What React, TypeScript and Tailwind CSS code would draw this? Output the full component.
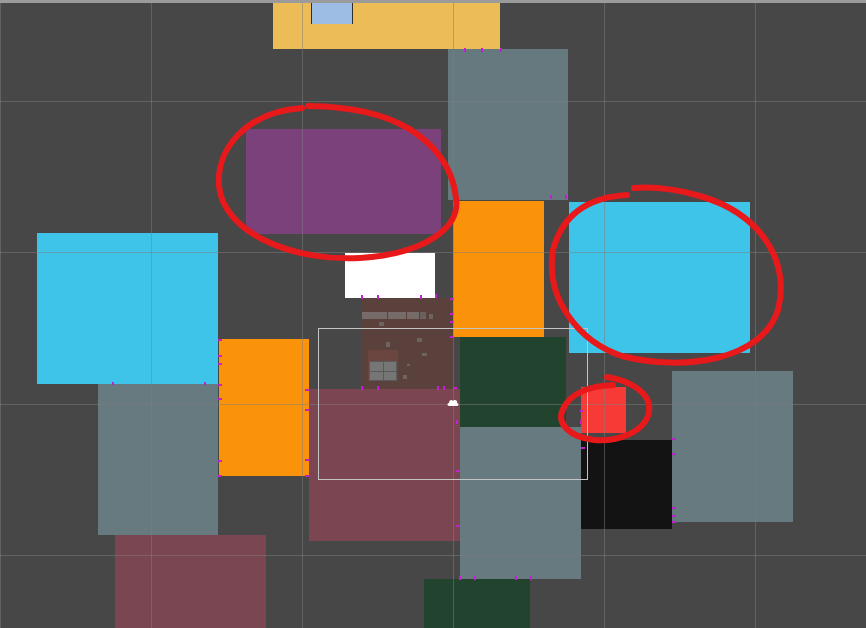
import React from "react";

// tile rectangles on the editor canvas: [left, top, width, height, colour class]
const tiles: Array<{ id: string; cls: string }> = [
  { id: "slate-top", cls: "left-[448px] top-[49px] h-[151px] w-[120px] bg-[#66797e]" },
  { id: "purple", cls: "left-[246px] top-[129px] h-[105px] w-[195px] bg-[#7b417a]" },
  { id: "white", cls: "left-[345px] top-[253px] h-[45px] w-[90px] bg-white" },
  { id: "orange-mid", cls: "left-[453px] top-[201px] h-[136px] w-[91px] bg-[#fb930a]" },
  { id: "cyan-left", cls: "left-[37px] top-[233px] h-[151px] w-[181px] bg-[#3ec4e8]" },
  { id: "cyan-right", cls: "left-[569px] top-[202px] h-[151px] w-[181px] bg-[#3ec4e8]" },
  { id: "orange-left", cls: "left-[219px] top-[339px] h-[137px] w-[90px] bg-[#fb930a]" },
  { id: "slate-left", cls: "left-[98px] top-[384px] h-[151px] w-[120px] bg-[#677a7f]" },
  { id: "wine-left", cls: "left-[115px] top-[535px] h-[93px] w-[151px] bg-[#7a4651]" },
  { id: "wine-mid", cls: "left-[309px] top-[389px] h-[152px] w-[151px] bg-[#7b4651]" },
  { id: "green-mid", cls: "left-[460px] top-[337px] h-[90px] w-[106px] bg-[#22432d]" },
  { id: "slate-mid", cls: "left-[460px] top-[427px] h-[152px] w-[121px] bg-[#677a7f]" },
  { id: "green-bottom", cls: "left-[424px] top-[579px] h-[49px] w-[106px] bg-[#22432d]" },
  { id: "black", cls: "left-[581px] top-[440px] h-[89px] w-[91px] bg-[#131313]" },
  { id: "red", cls: "left-[581px] top-[387px] h-[46px] w-[45px] bg-[#f83a36]" },
  { id: "slate-right", cls: "left-[672px] top-[371px] h-[151px] w-[121px] bg-[#677a7f]" },
];

// small magenta anchor marks: x, y, w, h
const ticks: Array<[number, number, number, number]> = [
  [218, 339, 4, 2], [218, 355, 4, 2], [218, 363, 4, 2], [218, 384, 4, 2], [218, 398, 4, 2],
  [218, 460, 4, 2], [218, 475, 4, 2], [204, 382, 2, 3], [112, 382, 2, 3],
  [305, 389, 4, 2], [305, 409, 4, 2], [305, 459, 4, 2], [305, 475, 4, 2],
  [361, 295, 2, 4], [377, 295, 2, 4], [420, 295, 2, 4], [435, 294, 2, 4],
  [450, 298, 4, 2], [450, 313, 4, 2], [450, 321, 4, 2], [450, 336, 4, 2],
  [361, 386, 2, 4], [377, 386, 2, 4], [437, 386, 2, 4], [443, 386, 2, 4],
  [453, 387, 4, 2], [456, 420, 2, 4], [456, 470, 4, 2], [456, 525, 4, 2],
  [459, 576, 2, 4], [474, 576, 2, 4], [515, 576, 2, 4], [530, 576, 2, 4],
  [581, 447, 4, 2], [580, 410, 3, 2], [580, 420, 2, 4],
  [672, 438, 4, 2], [672, 453, 4, 2], [672, 507, 4, 2], [672, 515, 4, 2], [672, 521, 4, 2],
  [550, 195, 2, 4], [565, 195, 2, 4], [464, 48, 2, 4], [481, 48, 2, 4], [500, 48, 2, 4],
];

function BrownTile() {
  return (
    <div className="absolute left-[362px] top-[298px] h-[91px] w-[91px] bg-[#5b413b]">
      <div className="mt-[14px] flex h-[7px] gap-[1px]">
        <div className="w-[25px] bg-[#766b68]" />
        <div className="w-[18px] bg-[#766b68]" />
        <div className="w-[12px] bg-[#766b68]" />
        <div className="w-[6px] bg-[#6a605e]" />
      </div>
      <svg className="absolute left-0 top-0" width="91" height="91" viewBox="0 0 91 91">
        <g fill="#6d6361">
          <rect x="17" y="24" width="5" height="4" />
          <rect x="67" y="16" width="4" height="5" />
          <rect x="24" y="44" width="4" height="5" />
          <rect x="55" y="40" width="5" height="4" />
          <rect x="60" y="55" width="5" height="3" />
          <rect x="45" y="66" width="3" height="2" />
          <rect x="41" y="77" width="4" height="4" />
        </g>
      </svg>
      <div className="absolute left-[6px] top-[52px] flex h-[31px] w-[30px] items-end bg-[#6b4641] px-[1px]">
        <div className="grid h-[20px] w-full grid-cols-2 gap-[1px] bg-[#5a5a5a] p-[1px]">
          <div className="bg-[#767676]" />
          <div className="bg-[#767676]" />
          <div className="bg-[#767676]" />
          <div className="bg-[#767676]" />
        </div>
      </div>
    </div>
  );
}

export default function App() {
  const vLines = [0, 151, 302, 453, 604, 755];
  const hLines = [101, 252, 404, 555];

  return (
    <div className="relative h-[628px] w-[866px] overflow-hidden bg-[#474747] font-['Liberation_Sans',sans-serif]">
      <div className="h-[3px] w-full bg-[#9b9b9b]" />

      <div className="absolute left-[273px] top-[3px] h-[46px] w-[227px] bg-[#ecbc57] pl-[38px]">
        <div className="h-[21px] w-[42px] border-x border-[#2d2d2d] bg-[#9dbde5]" />
      </div>
      {tiles.slice(0, 3).map((t) => (
        <div key={t.id} className={`absolute ${t.cls}`} />
      ))}
      <BrownTile />
      {tiles.slice(3).map((t) => (
        <div key={t.id} className={`absolute ${t.cls}`} />
      ))}

      {/* grid, anchors, selection, cursor and hand-drawn marks */}
      <svg className="absolute left-0 top-0" width="866" height="628" viewBox="0 0 866 628" fill="none">
        <g fill="#c21fd0">
          {ticks.map(([x, y, w, h], i) => (
            <rect key={i} x={x} y={y} width={w} height={h} />
          ))}
        </g>
        <g stroke="rgba(125,125,125,0.5)" strokeWidth="1">
          {vLines.map((x) => (
            <line key={`v${x}`} x1={x + 0.5} y1="3" x2={x + 0.5} y2="628" />
          ))}
          {hLines.map((y) => (
            <line key={`h${y}`} x1="0" y1={y + 0.5} x2="866" y2={y + 0.5} />
          ))}
        </g>
        <rect x="318.5" y="328.5" width="269" height="151" stroke="#c4c4c4" strokeWidth="1" />
        <path d="M449 406 C447 406 447 403 449 403 C449 400 452 399 453 401 C454 399 458 400 457 403 C459 403 459 406 457 406 Z" fill="#ffffff" />
        <g stroke="#e8191b" strokeWidth="6" strokeLinecap="round" strokeLinejoin="round">
          <path d="M302 108 C245 112 216 150 219 186 C223 232 292 262 360 258 C424 254 461 228 456 198 C452 160 420 116 340 108 C326 106 316 106 308 106" />
          <path d="M627 195 C592 197 563 212 553 250 C545 300 580 342 622 356 C684 372 762 360 778 310 C790 262 762 214 700 196 C672 188 648 187 634 188" />
          <path d="M607 377 C632 381 652 394 649 412 C645 432 618 442 594 440 C570 437 556 424 563 409 C570 393 590 386 613 385" />
        </g>
      </svg>
    </div>
  );
}
